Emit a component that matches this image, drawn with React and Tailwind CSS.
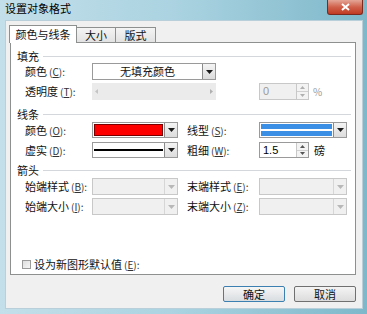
import React from 'react';

const font = "font-['Noto_Sans_CJK_SC','Liberation_Sans',sans-serif]";

function Arrow({ disabled }) {
  return (
    <svg width="7" height="4" viewBox="0 0 7 4">
      <path d="M0 0h7L3.5 4z" fill={disabled ? '#b8b8b8' : '#1b1b1b'} />
    </svg>
  );
}

function Combo({ className, disabled, children }) {
  return (
    <div
      className={`flex h-full border ${
        disabled ? 'border-[#c8c8c8] bg-[#f0f0f0]' : 'border-[#9a9a9a] bg-white'
      } ${className}`}
    >
      <div className="flex-1 flex items-center p-[1px] min-w-0">{children}</div>
      <div
        className={`w-[13px] flex items-center justify-center border-l ${
          disabled
            ? 'border-[#d6d6d6] bg-[#f0f0f0]'
            : 'border-[#8a8a8a] bg-gradient-to-b from-[#f4f4f4] to-[#dcdcdc]'
        }`}
      >
        <Arrow disabled={disabled} />
      </div>
    </div>
  );
}

function Spin({ value, disabled }) {
  return (
    <div
      className={`flex w-[50px] h-full border ${
        disabled ? 'border-[#c8c8c8] bg-[#f0f0f0] text-[#9a9a9a]' : 'border-[#9a9a9a] bg-white text-black'
      }`}
    >
      <div className="flex-1 flex items-center pl-[3px] text-[11px] font-['Liberation_Sans',sans-serif]">
        {value}
      </div>
      <div className="w-[12px] flex flex-col border-l border-[#c8c8c8]">
        <div className="flex-1 flex items-center justify-center border-b border-[#d0d0d0] bg-[#f3f3f3]">
          <svg width="5" height="3" viewBox="0 0 5 3">
            <path d="M0 3h5L2.5 0z" fill={disabled ? '#b0b0b0' : '#555'} />
          </svg>
        </div>
        <div className="flex-1 flex items-center justify-center bg-[#f3f3f3]">
          <svg width="5" height="3" viewBox="0 0 5 3">
            <path d="M0 0h5L2.5 3z" fill={disabled ? '#b0b0b0' : '#555'} />
          </svg>
        </div>
      </div>
    </div>
  );
}

function Label({ text, k, className }) {
  return (
    <div className={`shrink-0 text-[11px] leading-none text-[#111] ${className}`}>
      {text}
      <span className="ml-[2px] text-[10px] text-[#333]">
        (<span className="underline">{k}</span>):
      </span>
    </div>
  );
}

function Header({ text, className }) {
  return (
    <div className={`flex items-center h-[14px] pl-[6px] pr-[4px] ${className}`}>
      <span className="text-[11px] leading-none text-[#111]">{text}</span>
      <div className="flex-1 ml-[4px] border-t border-[#d4d8dc]" />
    </div>
  );
}

export default function App() {
  return (
    <div
      className={`w-[367px] h-[314px] flex flex-col bg-gradient-to-r from-[#c3dfea] via-[#a9d2e0] to-[#7db8ca] ${font}`}
    >
      {/* title bar */}
      <div className="h-[20px] flex items-start shrink-0">
        <div className="pl-[5px] pt-[3px] text-[11px] leading-none text-black">设置对象格式</div>
        <div className="flex-1" />
        <div className="mr-[4px] w-[36px] h-[15px] rounded-b-[3px] border border-t-0 border-[#7a2a20] bg-gradient-to-b from-[#e4a597] via-[#d0604b] to-[#c03a22] flex items-center justify-center">
          <svg width="9" height="8" viewBox="0 0 9 8">
            <path d="M1 1l7 6M8 1L1 7" stroke="#fff" strokeWidth="2" />
          </svg>
        </div>
      </div>

      {/* client area */}
      <div className="ml-[5px] w-[358px] h-[289px] bg-[#f0f0f0] border border-[#b9d0da] flex flex-col">
        {/* tab strip */}
        <div className="h-[21px] flex items-end pl-[3px] text-[11px] leading-none text-[#111]">
          <div className="relative z-10 -mb-px h-[18px] w-[68px] bg-white border border-b-0 border-[#8e8f8f] flex items-center justify-center">
            颜色与线条
          </div>
          <div className="h-[15px] w-[39px] border border-l-0 border-b-0 border-[#8e8f8f] bg-gradient-to-b from-[#f4f4f4] to-[#e2e2e2] flex items-center justify-center">
            大小
          </div>
          <div className="h-[15px] w-[40px] border border-l-0 border-b-0 border-[#8e8f8f] bg-gradient-to-b from-[#f4f4f4] to-[#e2e2e2] flex items-center justify-center">
            版式
          </div>
        </div>

        {/* tab panel */}
        <div className="ml-[4px] w-[346px] h-[233px] bg-white border border-[#8e8f8f] flex flex-col">
          <Header text="填充" className="mt-[6px]" />

          <div className="flex items-center h-[17px] pl-[14px]">
            <Label text="颜色" k="C" className="w-[67px]" />
            <Combo className="w-[124px]">
              <div className="flex-1 text-center text-[11px] leading-none text-[#111]">无填充颜色</div>
            </Combo>
          </div>

          <div className="flex items-center h-[17px] pl-[14px] mt-[3px]">
            <Label text="透明度" k="T" className="w-[67px]" />
            <div className="w-[124px] h-full bg-[#ebebeb] flex items-center justify-between px-[3px]">
              <svg width="3" height="5" viewBox="0 0 3 5">
                <path d="M3 0v5L0 2.5z" fill="#c4c4c4" />
              </svg>
              <svg width="3" height="5" viewBox="0 0 3 5">
                <path d="M0 0v5L3 2.5z" fill="#b0b0b0" />
              </svg>
            </div>
            <div className="ml-[43px] h-full">
              <Spin value="0" disabled />
            </div>
            <span className="ml-[4px] text-[10px] leading-none text-[#9a9a9a]">%</span>
          </div>

          <Header text="线条" className="mt-[7px]" />

          <div className="flex items-center h-[16px] pl-[14px] mt-[1px]">
            <Label text="颜色" k="O" className="w-[67px]" />
            <Combo className="w-[86px]">
              <div className="w-full h-full bg-[#ff0000] border border-[#7a0000]" />
            </Combo>
            <Label text="线型" k="S" className="w-[72px] ml-[9px]" />
            <Combo className="w-[88px]">
              <div className="w-full h-full bg-[#3b8fe4] flex items-center">
                <div className="w-full h-[2px] bg-white" />
              </div>
            </Combo>
          </div>

          <div className="flex items-center h-[16px] pl-[14px] mt-[4px]">
            <Label text="虚实" k="D" className="w-[67px]" />
            <Combo className="w-[86px]">
              <div className="w-full h-[2px] bg-black" />
            </Combo>
            <Label text="粗细" k="W" className="w-[72px] ml-[9px]" />
            <div className="h-full">
              <Spin value="1.5" />
            </div>
            <span className="ml-[5px] text-[11px] leading-none text-[#111]">磅</span>
          </div>

          <Header text="箭头" className="mt-[5px]" />

          <div className="flex items-center h-[17px] pl-[14px] mt-[1px]">
            <Label text="始端样式" k="B" className="w-[67px]" />
            <Combo className="w-[86px]" disabled />
            <Label text="末端样式" k="E" className="w-[72px] ml-[9px]" />
            <Combo className="w-[88px]" disabled />
          </div>

          <div className="flex items-center h-[17px] pl-[14px] mt-[3px]">
            <Label text="始端大小" k="I" className="w-[67px]" />
            <Combo className="w-[86px]" disabled />
            <Label text="末端大小" k="Z" className="w-[72px] ml-[9px]" />
            <Combo className="w-[88px]" disabled />
          </div>

          <div className="flex items-center h-[14px] pl-[11px] mt-[42px]">
            <div className="w-[9px] h-[9px] border border-[#9a9a9a] bg-gradient-to-br from-[#dedede] to-[#f6f6f6]" />
            <Label text="设为新图形默认值" k="E" className="ml-[3px]" />
          </div>
        </div>

        {/* buttons */}
        <div className="flex justify-end gap-[9px] pr-[6px] mt-[11px]">
          <div className="w-[62px] h-[16px] rounded-[2px] border border-[#3c7fb1] bg-gradient-to-b from-[#f6f6f6] to-[#d9dde0] flex items-center justify-center text-[11px] leading-none text-[#111]">
            确定
          </div>
          <div className="w-[62px] h-[16px] rounded-[2px] border border-[#707070] bg-gradient-to-b from-[#f4f4f4] to-[#dcdcdc] flex items-center justify-center text-[11px] leading-none text-[#111]">
            取消
          </div>
        </div>
      </div>
    </div>
  );
}
